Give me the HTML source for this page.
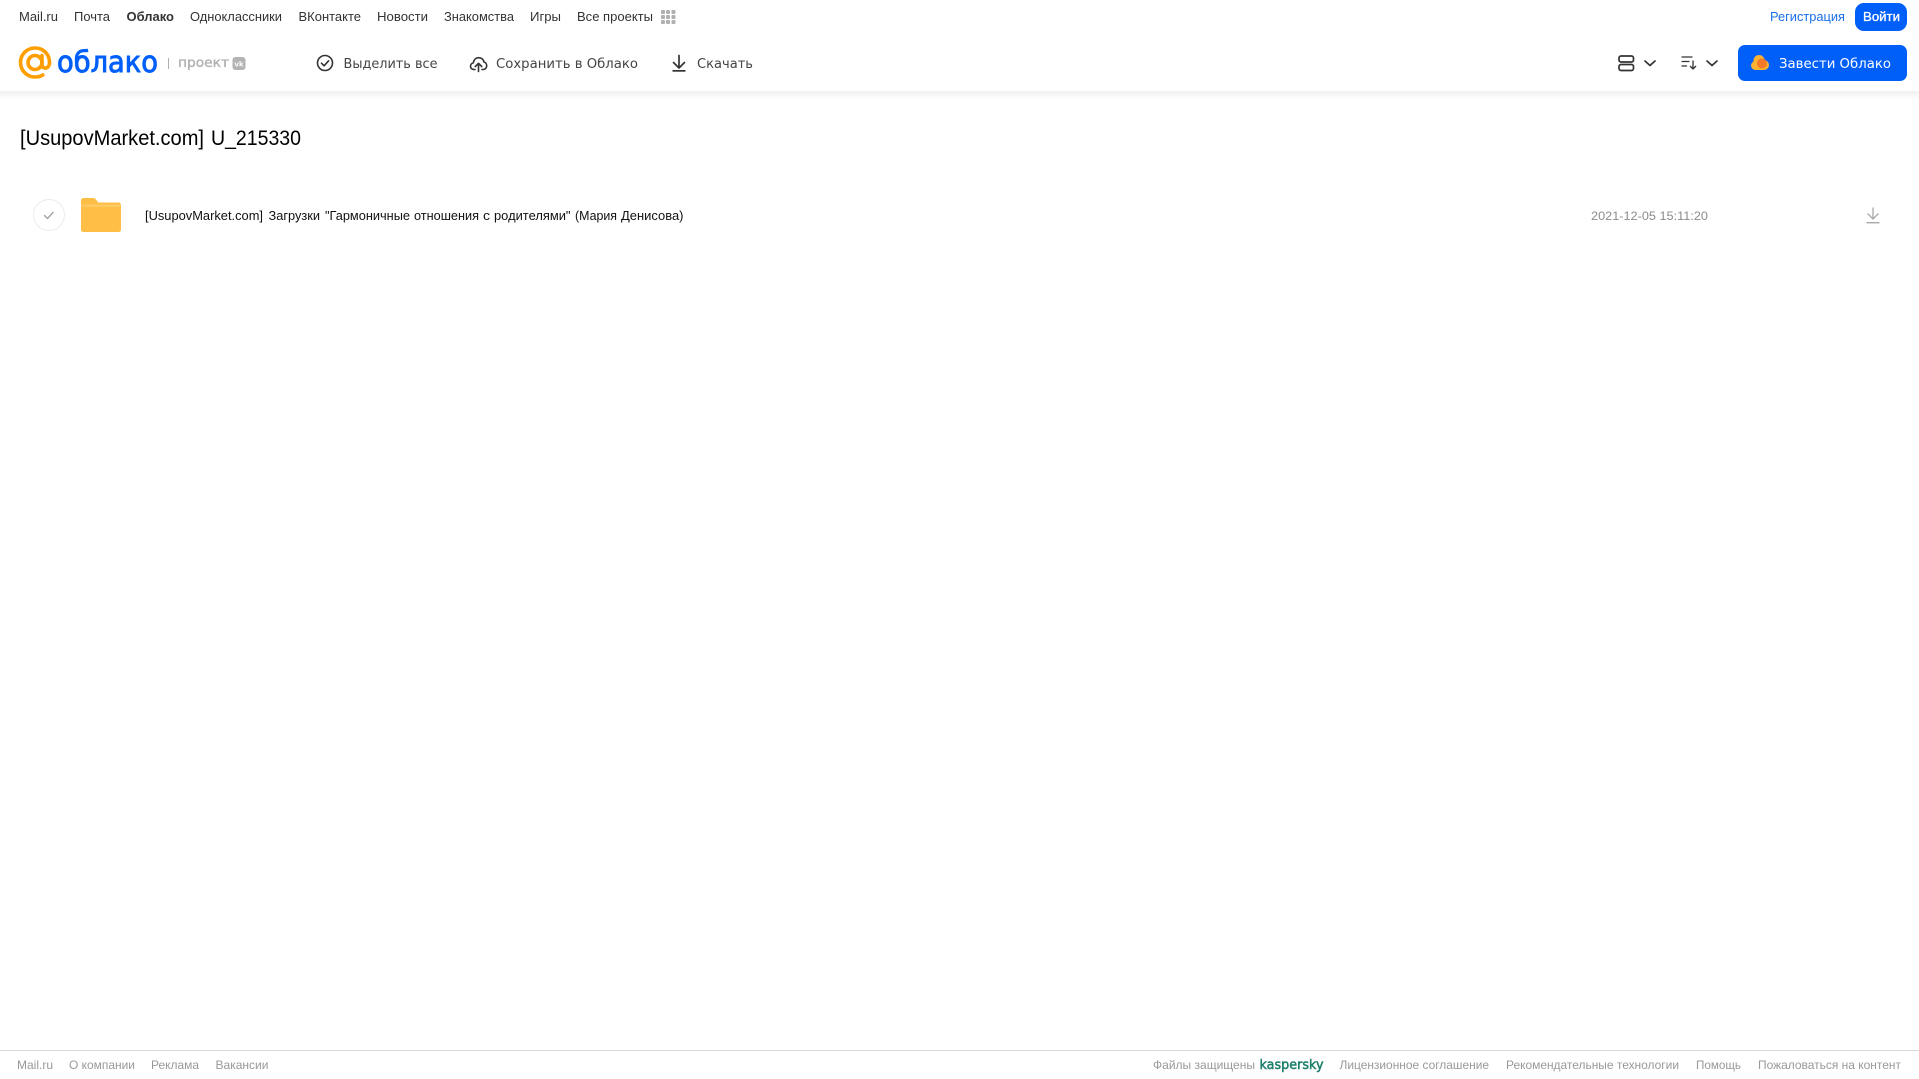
<!DOCTYPE html>
<html lang="ru">
<head>
<meta charset="utf-8">
<title>[UsupovMarket.com] U_215330</title>
<style>
html,body{margin:0;padding:0;background:#fff;width:1919px;height:1079px;overflow:hidden}
svg{display:block;position:absolute;left:0;top:0}
text{font-family:"Liberation Sans",Arial,sans-serif}
.n{font-size:12.5px;fill:#333}
.a{font-size:13.5px;fill:#444;font-family:"DejaVu Sans","Liberation Sans",sans-serif}
.f{font-size:12px;fill:#999}
.r{font-size:12.5px;fill:#111}
</style>
</head>
<body>
<svg width="1919" height="1079" viewBox="0 0 1919 1079" xmlns="http://www.w3.org/2000/svg">
<defs>
<linearGradient id="sh" x1="0" y1="0" x2="0" y2="1"><stop offset="0" stop-color="#f0f0f0"/><stop offset="1" stop-color="#fff"/></linearGradient>
</defs>
<rect x="0" y="91" width="1919" height="8" fill="url(#sh)"/>

<!-- top nav -->
<text class="n" x="19" y="21" textLength="39" lengthAdjust="spacingAndGlyphs">Mail.ru</text>
<text class="n" x="74" y="21" textLength="36" lengthAdjust="spacingAndGlyphs">Почта</text>
<text class="n" x="126.500" y="21" textLength="47.500" lengthAdjust="spacingAndGlyphs" font-weight="700">Облако</text>
<text class="n" x="190" y="21" textLength="92" lengthAdjust="spacingAndGlyphs">Одноклассники</text>
<text class="n" x="298.500" y="21" textLength="62.500" lengthAdjust="spacingAndGlyphs">ВКонтакте</text>
<text class="n" x="377" y="21" textLength="51" lengthAdjust="spacingAndGlyphs">Новости</text>
<text class="n" x="444" y="21" textLength="70" lengthAdjust="spacingAndGlyphs">Знакомства</text>
<text class="n" x="530" y="21" textLength="31" lengthAdjust="spacingAndGlyphs">Игры</text>
<text class="n" x="577" y="21" textLength="76" lengthAdjust="spacingAndGlyphs">Все проекты</text>
<g fill="#b0b0b0">
<rect x="661" y="10" width="4" height="4" rx="1"/><rect x="666" y="10" width="4" height="4" rx="1"/><rect x="671.500" y="10" width="4" height="4" rx="1"/>
<rect x="661" y="15" width="4" height="4" rx="1"/><rect x="666" y="15" width="4" height="4" rx="1"/><rect x="671.500" y="15" width="4" height="4" rx="1"/>
<rect x="661" y="20" width="4" height="4" rx="1"/><rect x="666" y="20" width="4" height="4" rx="1"/><rect x="671.500" y="20" width="4" height="4" rx="1"/>
</g>

<text x="1770" y="21" font-size="12.500" fill="#1a6fe8" textLength="75" lengthAdjust="spacingAndGlyphs">Регистрация</text>
<rect x="1855" y="3" width="52" height="28" rx="9" fill="#005ff9"/>
<text x="1863" y="21" font-size="12.500" fill="#fff" stroke="#fff" stroke-width=".3" textLength="37" lengthAdjust="spacingAndGlyphs">Войти</text>

<!-- logo -->
<g fill="none" stroke="#ff9e00" stroke-width="3.600" stroke-linecap="round">
<circle cx="35" cy="62.500" r="7"/>
<path d="M42 55.500v9c0 5.200 7.500 5 7.500-2 0-8.500-6.300-14.500-14.500-14.500s-14.500 6.500-14.500 14.500 6.500 14.500 14.500 14.500c3 0 5.500-.6 7.800-2"/>
</g>
<text x="57" y="72" font-size="29" fill="#005ff9" stroke="#005ff9" stroke-width=".9" textLength="101" lengthAdjust="spacingAndGlyphs" style="font-family:'DejaVu Sans','Liberation Sans',sans-serif">облако</text>
<rect x="168" y="58" width="1" height="11" fill="#b0b0b0"/>
<text x="178" y="67" font-size="13.500" fill="#b0b0b0" stroke="#b0b0b0" stroke-width=".35" textLength="51" lengthAdjust="spacingAndGlyphs" style="font-family:'DejaVu Sans','Liberation Sans',sans-serif">проект</text>
<rect x="232.500" y="57" width="13" height="13" rx="3" fill="#b3b3b3"/>
<text x="234.500" y="66.500" font-size="7.500" font-weight="700" fill="#fff" textLength="9" lengthAdjust="spacingAndGlyphs">vk</text>

<!-- actions -->
<circle cx="325" cy="63" r="7.500" fill="none" stroke="#333" stroke-width="1.600"/>
<path d="M321.500 63.200l2.600 2.600 4.500-5" fill="none" stroke="#333" stroke-width="1.600" stroke-linecap="round" stroke-linejoin="round"/>
<text class="a" x="343.500" y="68" textLength="94" lengthAdjust="spacingAndGlyphs">Выделить все</text>

<path d="M475 69.500h-1.200c-1.900 0-3.300-1.500-3.300-3.300 0-1.700 1.200-3 2.800-3.300.5-3.200 2.600-5.200 5.400-5.200 2.700 0 4.800 1.800 5.300 4.300 1.600.4 2.700 2 2.700 3.800 0 2.100-1.500 3.700-3.500 3.700H482" fill="none" stroke="#333" stroke-width="1.600" stroke-linecap="round" stroke-linejoin="round"/>
<path d="M478.500 71.500v-8M475.300 66.500l3.200-3.200 3.200 3.200" fill="none" stroke="#333" stroke-width="1.600" stroke-linecap="round" stroke-linejoin="round"/>
<text class="a" x="496" y="68" textLength="142" lengthAdjust="spacingAndGlyphs">Сохранить в Облако</text>

<path d="M679 55.500v11.500M673.500 62.500l5.500 5.500 5.500-5.500" fill="none" stroke="#333" stroke-width="1.700" stroke-linecap="round" stroke-linejoin="round"/>
<rect x="672.500" y="70" width="13" height="1.700" fill="#333"/>
<text class="a" x="697" y="68" textLength="56" lengthAdjust="spacingAndGlyphs">Скачать</text>

<!-- right controls -->
<g fill="none" stroke="#333" stroke-width="1.700">
<rect x="1619" y="56" width="14.500" height="6" rx="2"/>
<rect x="1619" y="64.500" width="14.500" height="6" rx="2"/>
<path d="M1645 61l5 4.500 5-4.500" stroke-linecap="round" stroke-linejoin="round"/>
<path d="M1707 61l5 4.500 5-4.500" stroke-linecap="round" stroke-linejoin="round"/>
<path d="M1681.500 57h11M1681.500 61.500h8M1681.500 66h5.500M1693 60.500v8.500M1690 66l3 3 3-3" stroke-width="1.300"/>
</g>
<rect x="1738" y="45" width="169" height="36" rx="7" fill="#005ff9"/>
<g fill="#fdb331">
<circle cx="1759" cy="60.500" r="5.500"/>
<circle cx="1755.500" cy="65.500" r="4.500"/>
<circle cx="1764" cy="65" r="5"/>
<rect x="1755.500" y="62" width="9" height="8"/>
</g>
<circle cx="1762" cy="63.500" r="5" fill="#f47a29"/>
<text x="1779" y="68" class="a" style="fill:#fff" textLength="112" lengthAdjust="spacingAndGlyphs">Завести Облако</text>

<!-- title -->
<text x="20" y="145" font-size="21" fill="#000" textLength="184" lengthAdjust="spacingAndGlyphs">[UsupovMarket.com]</text>
<text x="211" y="145" font-size="21" fill="#000" textLength="90" lengthAdjust="spacingAndGlyphs">U_215330</text>

<!-- row -->
<circle cx="49" cy="215" r="15.500" fill="#fff" stroke="#ececec" stroke-width="1"/>
<path d="M44.500 215.500l3 3 5.500-6" fill="none" stroke="#a0a0a0" stroke-width="1.300" stroke-linecap="round" stroke-linejoin="round"/>
<path d="M81 200.500c0-1.400 1.100-2.500 2.500-2.500h9.500c1.500 0 2.500.8 3.300 1.900l1.200 1.600c.5.700 1.100 1 2 1h19c1.400 0 2.500 1.100 2.500 2.500v24.500c0 1.400-1.100 2.500-2.500 2.500h-35c-1.400 0-2.500-1.100-2.500-2.500z" fill="#ffbf47"/>
<path d="M81 206c0-1 .8-1.500 1.500-1.500h37c.8 0 1.500.6 1.500 1.500v1H81z" fill="#ffca62"/>
<text class="r" x="145" y="220" textLength="118" lengthAdjust="spacingAndGlyphs">[UsupovMarket.com]</text>
<text class="r" x="268.500" y="220" textLength="51.500" lengthAdjust="spacingAndGlyphs">Загрузки</text>
<text class="r" x="325" y="220" textLength="85" lengthAdjust="spacingAndGlyphs">"Гармоничные</text>
<text class="r" x="414" y="220" textLength="65" lengthAdjust="spacingAndGlyphs">отношения</text>
<text class="r" x="483" y="220" textLength="7" lengthAdjust="spacingAndGlyphs">с</text>
<text class="r" x="494" y="220" textLength="76.500" lengthAdjust="spacingAndGlyphs">родителями"</text>
<text class="r" x="575" y="220" textLength="42" lengthAdjust="spacingAndGlyphs">(Мария</text>
<text class="r" x="621" y="220" textLength="62.500" lengthAdjust="spacingAndGlyphs">Денисова)</text>
<text x="1591" y="220" font-size="12" fill="#8c8c8c" textLength="117" lengthAdjust="spacingAndGlyphs">2021-12-05 15:11:20</text>
<path d="M1873 207.500v11M1867.500 213.500l5.500 5.500 5.500-5.500" fill="none" stroke="#a8a8a8" stroke-width="1.300"/>
<rect x="1866.500" y="222" width="13" height="1.400" fill="#a8a8a8"/>

<!-- footer -->
<rect x="0" y="1050" width="1919" height="1" fill="#d9d9d9"/>
<text class="f" x="17" y="1069" textLength="36" lengthAdjust="spacingAndGlyphs">Mail.ru</text>
<text class="f" x="69" y="1069" textLength="66" lengthAdjust="spacingAndGlyphs">О компании</text>
<text class="f" x="151" y="1069" textLength="48" lengthAdjust="spacingAndGlyphs">Реклама</text>
<text class="f" x="215.500" y="1069" textLength="53" lengthAdjust="spacingAndGlyphs">Вакансии</text>
<text class="f" x="1153" y="1069" textLength="102" lengthAdjust="spacingAndGlyphs">Файлы защищены</text>
<text x="1259.500" y="1069" font-size="13" fill="#1d7f6b" stroke="#1d7f6b" stroke-width=".5" textLength="64" lengthAdjust="spacingAndGlyphs" style="font-family:'DejaVu Sans','Liberation Sans',sans-serif">kaspersky</text>
<text class="f" x="1339.500" y="1069" textLength="149.500" lengthAdjust="spacingAndGlyphs">Лицензионное соглашение</text>
<text class="f" x="1506" y="1069" textLength="173" lengthAdjust="spacingAndGlyphs">Рекомендательные технологии</text>
<text class="f" x="1696" y="1069" textLength="45" lengthAdjust="spacingAndGlyphs">Помощь</text>
<text class="f" x="1758" y="1069" textLength="143" lengthAdjust="spacingAndGlyphs">Пожаловаться на контент</text>
</svg>
</body>
</html>
